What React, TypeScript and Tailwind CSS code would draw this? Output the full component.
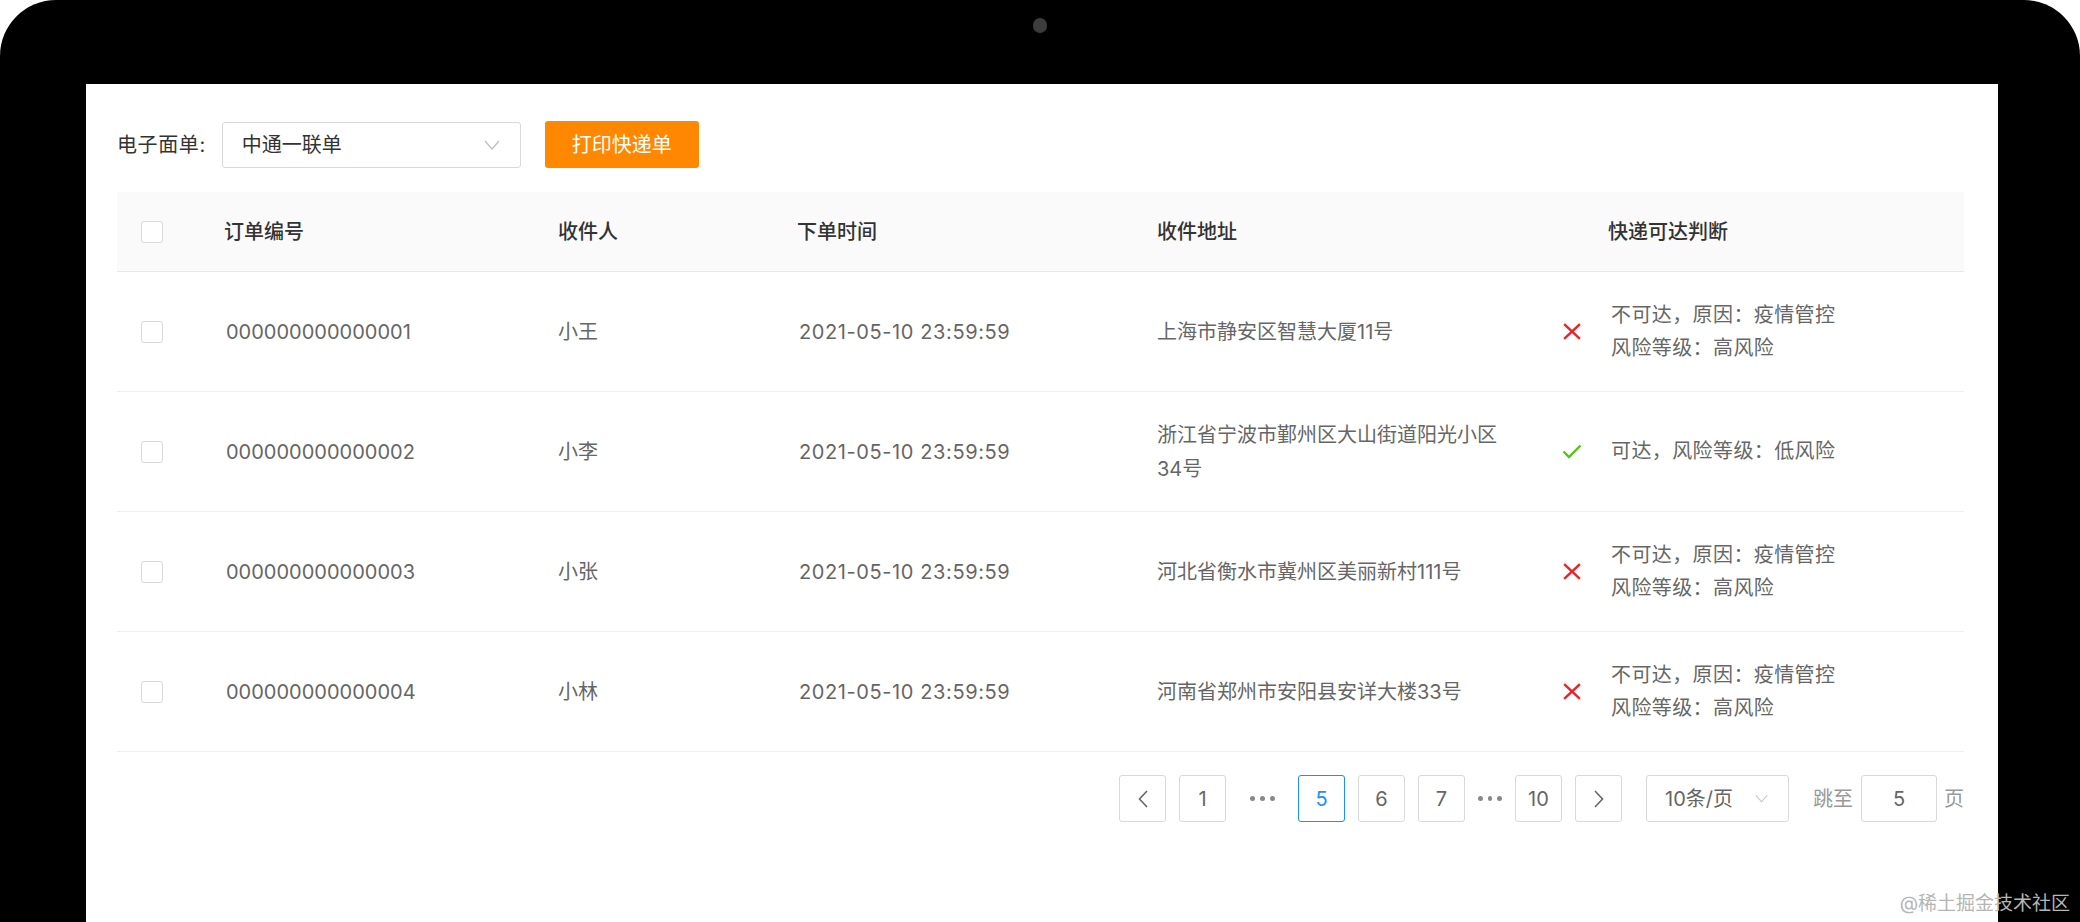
import React from 'react';

type Row = {
  id: string;
  name: string;
  time: string;
  address: string;
  ok: boolean;
};

const rows: Row[] = [
  { id: '000000000000001', name: '小王', time: '2021-05-10 23:59:59', address: '上海市静安区智慧大厦11号', ok: false },
  { id: '000000000000002', name: '小李', time: '2021-05-10 23:59:59', address: '浙江省宁波市鄞州区大山街道阳光小区34号', ok: true },
  { id: '000000000000003', name: '小张', time: '2021-05-10 23:59:59', address: '河北省衡水市冀州区美丽新村111号', ok: false },
  { id: '000000000000004', name: '小林', time: '2021-05-10 23:59:59', address: '河南省郑州市安阳县安详大楼33号', ok: false },
];

const grid = 'grid grid-cols-[107px_334px_239px_360px_446px_1fr] items-center';

function Checkbox() {
  return <span className="block w-[22px] h-[22px] border border-[#d9d9d9] rounded-[3px] bg-white" />;
}

function Down({ w = 16, h = 10 }: { w?: number; h?: number }) {
  return (
    <svg width={w} height={h} viewBox="0 0 16 10" fill="none" stroke="#bfbfbf" strokeWidth="1.3">
      <polyline points="1,1 8,9 15,1" />
    </svg>
  );
}

function Cross() {
  return (
    <svg width="18" height="17" viewBox="0 0 18 17" fill="none" stroke="#e8252b" strokeWidth="2.4" strokeLinecap="square">
      <line x1="2" y1="2" x2="16" y2="15" />
      <line x1="16" y1="2" x2="2" y2="15" />
    </svg>
  );
}

function Check() {
  return (
    <svg width="20" height="15" viewBox="0 0 20 15" fill="none" stroke="#52c41a" strokeWidth="2.4">
      <polyline points="1.5,7.5 7,13 18.5,1.5" />
    </svg>
  );
}

function PageBox({ children, active }: { children: React.ReactNode; active?: boolean }) {
  return (
    <div
      className={
        active
          ? 'w-[47px] h-[47px] border border-[#1890ff] text-[#1890ff] rounded-[3px] flex items-center justify-center'
          : 'w-[47px] h-[47px] border border-[#d9d9d9] text-[#666] rounded-[3px] flex items-center justify-center'
      }
    >
      {children}
    </div>
  );
}

function Dots({ w }: { w: string }) {
  return (
    <div className={`${w} h-[47px] flex items-center justify-center gap-[5px]`}>
      <span className="w-[5px] h-[5px] rounded-full bg-[#888]" />
      <span className="w-[5px] h-[5px] rounded-full bg-[#888]" />
      <span className="w-[5px] h-[5px] rounded-full bg-[#888]" />
    </div>
  );
}

export default function App() {
  return (
    <div className="w-[2080px] h-[922px] bg-white overflow-hidden relative font-[Inter,'Noto_Sans_CJK_SC',sans-serif]">
      <div className="h-full bg-black rounded-t-[56px] flex flex-col">
        <div className="h-[84px] shrink-0 flex justify-center pt-[18px]">
          <div className="w-[14px] h-[15px] rounded-full bg-[#3c3c3c]" />
        </div>

        <div className="flex-1 bg-white ml-[86px] mr-[82px] pl-[31px] pr-[34px] pt-[37px]">
          {/* toolbar */}
          <div className="flex items-center h-[47px] text-[20px]">
            <span className="text-[#333] tracking-[0.6px]">电子面单:</span>
            <div className="ml-[16px] w-[299px] h-[46px] border border-[#d9d9d9] rounded-[3px] flex items-center justify-between pl-[19px] pr-[20px] text-[#333]">
              <span>中通一联单</span>
              <Down />
            </div>
            <button className="ml-[24px] w-[154px] h-[47px] bg-[#ff8800] rounded-[3px] text-white">打印快递单</button>
          </div>

          {/* table */}
          <div className="mt-[24px] text-[20px]">
            <div className={`${grid} h-[80px] bg-[#fafafa] border-b border-[#e8e8e8] text-[#333] font-medium`}>
              <div className="pl-[24px]"><Checkbox /></div>
              <div>订单编号</div>
              <div>收件人</div>
              <div>下单时间</div>
              <div>收件地址</div>
              <div className="pl-[5px]">快递可达判断</div>
            </div>

            {rows.map((r) => (
              <div key={r.id} className={`${grid} h-[120px] border-b border-[#efefef] text-[#666]`}>
                <div className="pl-[24px]"><Checkbox /></div>
                <div className="pl-[2px]">{r.id}</div>
                <div>{r.name}</div>
                <div className="pl-[2px] tracking-[0.6px]">{r.time}</div>
                <div className="w-[350px] leading-[34px]">{r.address}</div>
                <div className="flex items-center -ml-[41px]">
                  <div className="w-[20px] flex justify-center">{r.ok ? <Check /> : <Cross />}</div>
                  <div className="ml-[29px] leading-[33px] tracking-[0.4px]">
                    {r.ok ? (
                      <div>可达，风险等级：低风险</div>
                    ) : (
                      <>
                        <div>不可达，原因：疫情管控</div>
                        <div>风险等级：高风险</div>
                      </>
                    )}
                  </div>
                </div>
              </div>
            ))}
          </div>

          {/* pagination */}
          <div className="mt-[23px] flex justify-end items-center text-[20px]">
            <div className="flex items-center gap-[13px]">
              <PageBox>
                <svg width="10" height="18" viewBox="0 0 10 18" fill="none" stroke="#666" strokeWidth="1.6">
                  <polyline points="9,1 1.5,9 9,17" />
                </svg>
              </PageBox>
              <PageBox>1</PageBox>
              <Dots w="w-[46px]" />
              <PageBox active>5</PageBox>
              <PageBox>6</PageBox>
              <PageBox>7</PageBox>
              <Dots w="w-[24px]" />
              <PageBox>10</PageBox>
              <PageBox>
                <svg width="10" height="18" viewBox="0 0 10 18" fill="none" stroke="#666" strokeWidth="1.6">
                  <polyline points="1,1 8.5,9 1,17" />
                </svg>
              </PageBox>
            </div>
            <div className="ml-[24px] w-[143px] h-[47px] border border-[#d9d9d9] rounded-[3px] flex items-center justify-between pl-[18px] pr-[20px] text-[#666]">
              <span>10条/页</span>
              <Down w={13} h={9} />
            </div>
            <span className="ml-[24px] text-[#999]">跳至</span>
            <div className="ml-[8px] w-[76px] h-[47px] border border-[#d9d9d9] rounded-[3px] flex items-center justify-center text-[#666]">5</div>
            <span className="ml-[7px] text-[#999]">页</span>
          </div>
        </div>
      </div>

      <div className="absolute right-[10px] bottom-[4px] text-[19px] text-[#b5b5b5]">@稀土掘金技术社区</div>
    </div>
  );
}
